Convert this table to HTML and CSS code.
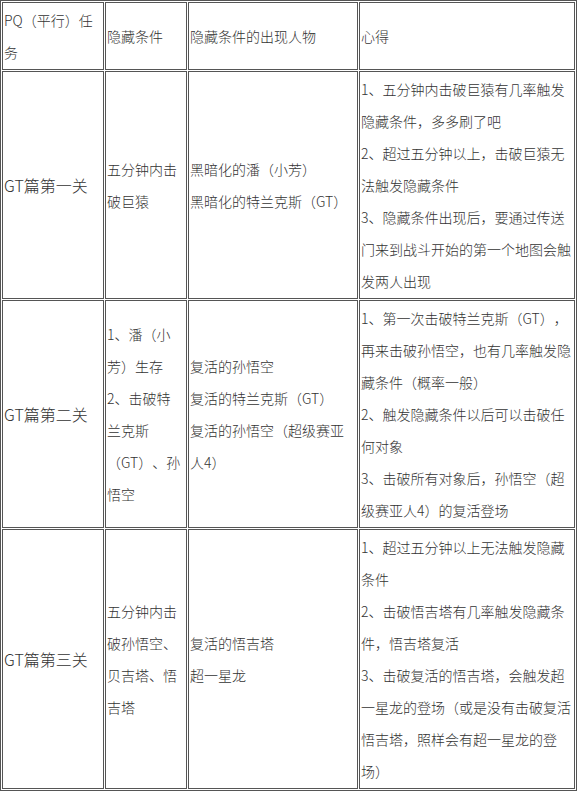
FILE: index.html
```html
<!DOCTYPE html>
<html lang="zh-CN">
<head>
<meta charset="utf-8">
<title>PQ任务</title>
<link rel="stylesheet" href="styles.css">
</head>
<body>
<table class="pq-table">
  <tbody>
    <tr>
      <td class="c1">PQ（平行）任务</td>
      <td class="c2">隐藏条件</td>
      <td class="c3">隐藏条件的出现人物</td>
      <td class="c4">心得</td>
    </tr>
    <tr>
      <td class="stage">GT篇第一关</td>
      <td>五分钟内击破巨猿</td>
      <td>黑暗化的潘（小芳）<br>黑暗化的特兰克斯（GT）</td>
      <td>1、五分钟内击破巨猿有几率触发隐藏条件，多多刷了吧<br>2、超过五分钟以上，击破巨猿无法触发隐藏条件<br>3、隐藏条件出现后，要通过传送门来到战斗开始的第一个地图会触发两人出现</td>
    </tr>
    <tr>
      <td class="stage">GT篇第二关</td>
      <td>1、潘（小芳）生存<br>2、击破特兰克斯（GT）、孙悟空</td>
      <td>复活的孙悟空<br>复活的特兰克斯（GT）<br>复活的孙悟空（超级赛亚人4）</td>
      <td>1、第一次击破特兰克斯（GT），再来击破孙悟空，也有几率触发隐藏条件（概率一般）<br>2、触发隐藏条件以后可以击破任何对象<br>3、击破所有对象后，孙悟空（超级赛亚人4）的复活登场</td>
    </tr>
    <tr>
      <td class="stage">GT篇第三关</td>
      <td>五分钟内击破孙悟空、贝吉塔、悟吉塔</td>
      <td>复活的悟吉塔<br>超一星龙</td>
      <td>1、超过五分钟以上无法触发隐藏条件<br>2、击破悟吉塔有几率触发隐藏条件，悟吉塔复活<br>3、击破复活的悟吉塔，会触发超一星龙的登场（或是没有击破复活悟吉塔，照样会有超一星龙的登场）</td>
    </tr>
  </tbody>
</table>
</body>
</html>
```

FILE: styles.css
```css
html, body {
  margin: 0;
  padding: 0;
  background: #ffffff;
}

.pq-table {
  table-layout: fixed;
  border-collapse: separate;
  border-spacing: 1px;
  border: 1px solid #555555;
  font-family: "Noto Sans CJK SC", "Noto Sans", sans-serif;
  font-size: 14px;
  font-weight: 300;
  line-height: 32px;
  color: #333333;
  text-spacing-trim: space-all;
}

.pq-table td {
  border: 1px solid #555555;
  padding: 1px 3px 1px 1px;
  vertical-align: middle;
  text-align: left;
  word-wrap: break-word;
}

.pq-table .stage {
  font-size: 16px;
}

.pq-table .c1 { width: 96px; }
.pq-table .c2 { width: 76px; }
.pq-table .c3 { width: 164px; }
.pq-table .c4 { width: 210px; }
```
